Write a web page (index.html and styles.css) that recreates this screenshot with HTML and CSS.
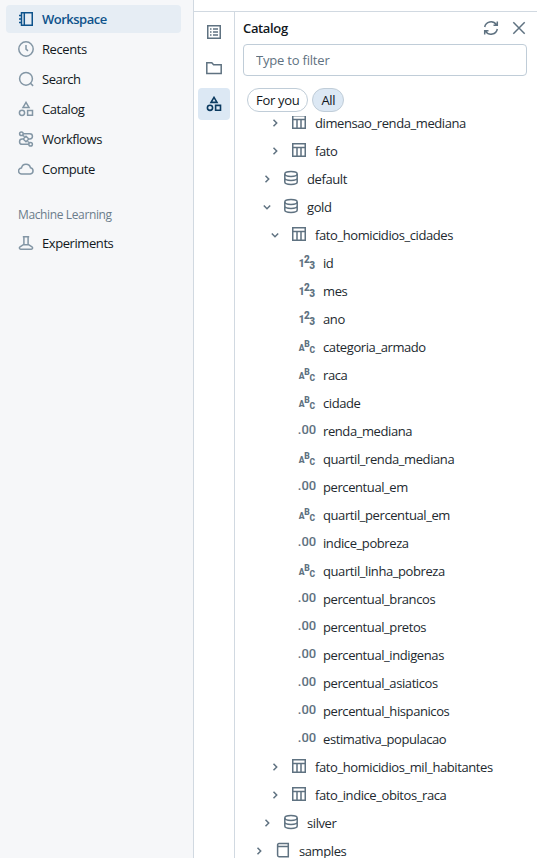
FILE: index.html
```html
<!DOCTYPE html>
<html lang="en">
<head>
<meta charset="utf-8">
<title>Catalog</title>
<link rel="stylesheet" href="styles.css">
</head>
<body>
<svg class="defs" aria-hidden="true">
  <symbol id="shapes" viewBox="0 0 16 16"><path d="M8 1.4 11 6.4H5ZM9.6 9.4h4.9v4.9H9.6Z"/><circle cx="4" cy="11.8" r="2.6"/></symbol>
  <symbol id="table" viewBox="0 0 16 16"><path d="M1.75 1.75h12.5v12.5H1.75ZM1.75 5.5h12.5M6 5.5v8.75M10 5.5v8.75"/></symbol>
  <symbol id="db" viewBox="0 0 16 16"><ellipse cx="8" cy="4" rx="6.2" ry="2.4"/><path d="M1.8 4v8c0 1.3 2.8 2.4 6.2 2.4s6.2-1.1 6.2-2.4V4M1.8 8c0 1.3 2.8 2.4 6.2 2.4s6.2-1.1 6.2-2.4"/></symbol>
  <symbol id="book" viewBox="0 0 16 16"><path d="M13.3 4.4H3.8a1.3 1.3 0 0 1-1.2-1.4A1.4 1.4 0 0 1 4 1.5h9.3v13.2H4a1.4 1.4 0 0 1-1.4-1.4V3"/></symbol>
  <symbol id="right" viewBox="0 0 16 16"><path d="m6.5 4.8 3.2 3.2-3.2 3.2"/></symbol>
  <symbol id="down" viewBox="0 0 16 16"><path d="m4.8 6.5 3.2 3.2 3.2-3.2"/></symbol>
</svg>
<div class="app">
  <nav class="sidebar">
    <a class="item active"><svg viewBox="0 0 16 16"><path d="M3.5 1.75h10.75v12.5H3.5ZM6.3 1.75v12.5M1 4.5h2.5M1 8h2.5M1 11.5h2.5"/></svg><span>Workspace</span></a>
    <a class="item"><svg viewBox="0 0 16 16"><circle cx="8" cy="8" r="7.2"/><path d="M8 4v4.2l2 1.6"/></svg><span>Recents</span></a>
    <a class="item"><svg viewBox="0 0 16 16"><circle cx="8" cy="7.8" r="6.4"/><path d="m12.2 12 2.9 2.9"/></svg><span>Search</span></a>
    <a class="item"><svg><use href="#shapes"/></svg><span>Catalog</span></a>
    <a class="item"><svg viewBox="0 0 16 16"><circle cx="3.4" cy="2.7" r="1.8"/><circle cx="12.6" cy="13.3" r="1.8"/><path d="M5.2 2.7h6.6a2.65 2.65 0 0 1 0 5.3h-1M5.2 8h-1a2.65 2.65 0 0 0 0 5.3h6.6M4.6 4.2c.6.9 1.2 1 2 1.2M11.4 11.8c-.6-.9-1.2-1-2-1.2M8 5.3 10.8 8 8 10.7 5.2 8Z"/></svg><span>Workflows</span></a>
    <a class="item"><svg viewBox="0 0 16 16"><path d="M3.8 13.1a3.1 3.1 0 0 1-.3-6.2 4.6 4.6 0 0 1 9-.1 3.2 3.2 0 0 1-.2 6.3Z"/></svg><span>Compute</span></a>
    <h2 class="section">Machine Learning</h2>
    <a class="item"><svg viewBox="0 0 16 16"><path d="M4.8 1.7h6.4M5.9 1.7v7.6L2 11.8a1.3 1.3 0 0 0 .7 2.4h10.6a1.3 1.3 0 0 0 .7-2.4l-3.9-2.5V1.7M5.6 9.8h4.8"/></svg><span>Experiments</span></a>
  </nav>
  <main class="main">
    <div class="rail">
      <button><svg viewBox="0 0 16 16"><path d="M1.75 1.75h12.5v12.5H1.75ZM4 5h1.5M7 5h5M4 8h1.5M7 8h5M4 11h1.5M7 11h5"/></svg></button>
      <button><svg viewBox="0 0 16 16"><path d="M.8 2.8h5l1.8 2h7.6v8.7H.8Z"/></svg></button>
      <button class="on"><svg><use href="#shapes"/></svg></button>
    </div>
    <section class="panel">
      <header class="head"><h1>Catalog</h1>
        <svg viewBox="0 0 16 16"><path d="M1.7 7A6.4 6.4 0 0 1 13.3 4.6M14.3 9A6.4 6.4 0 0 1 2.7 11.4M14.3 1.5v3.8h-3.8M1.7 14.5v-3.8h3.8"/></svg>
        <svg viewBox="0 0 16 16"><path d="m2.3 2.3 11.4 11.4M13.7 2.3 2.3 13.7"/></svg>
      </header>
      <input class="filter" placeholder="Type to filter">
      <div class="pills"><button>For you</button><button class="on">All</button></div>
      <div class="tree">
        <div class="row l2"><svg><use href="#right"/></svg><svg class="ic"><use href="#table"/></svg><span>dimensao_renda_mediana</span></div>
        <div class="row l2"><svg><use href="#right"/></svg><svg class="ic"><use href="#table"/></svg><span>fato</span></div>
        <div class="row l1"><svg><use href="#right"/></svg><svg class="ic"><use href="#db"/></svg><span>default</span></div>
        <div class="row l1"><svg><use href="#down"/></svg><svg class="ic"><use href="#db"/></svg><span>gold</span></div>
        <div class="row l2"><svg><use href="#down"/></svg><svg class="ic"><use href="#table"/></svg><span>fato_homicidios_cidades</span></div>
        <div class="row col"><i class="t n"><b>1</b><b>2</b><b>3</b></i><span>id</span></div>
        <div class="row col"><i class="t n"><b>1</b><b>2</b><b>3</b></i><span>mes</span></div>
        <div class="row col"><i class="t n"><b>1</b><b>2</b><b>3</b></i><span>ano</span></div>
        <div class="row col"><i class="t"><b>A</b><b>B</b><b>C</b></i><span>categoria_armado</span></div>
        <div class="row col"><i class="t"><b>A</b><b>B</b><b>C</b></i><span>raca</span></div>
        <div class="row col"><i class="t"><b>A</b><b>B</b><b>C</b></i><span>cidade</span></div>
        <div class="row col"><i class="d">.00</i><span>renda_mediana</span></div>
        <div class="row col"><i class="t"><b>A</b><b>B</b><b>C</b></i><span>quartil_renda_mediana</span></div>
        <div class="row col"><i class="d">.00</i><span>percentual_em</span></div>
        <div class="row col"><i class="t"><b>A</b><b>B</b><b>C</b></i><span>quartil_percentual_em</span></div>
        <div class="row col"><i class="d">.00</i><span>indice_pobreza</span></div>
        <div class="row col"><i class="t"><b>A</b><b>B</b><b>C</b></i><span>quartil_linha_pobreza</span></div>
        <div class="row col"><i class="d">.00</i><span>percentual_brancos</span></div>
        <div class="row col"><i class="d">.00</i><span>percentual_pretos</span></div>
        <div class="row col"><i class="d">.00</i><span>percentual_indigenas</span></div>
        <div class="row col"><i class="d">.00</i><span>percentual_asiaticos</span></div>
        <div class="row col"><i class="d">.00</i><span>percentual_hispanicos</span></div>
        <div class="row col"><i class="d">.00</i><span>estimativa_populacao</span></div>
        <div class="row l2"><svg><use href="#right"/></svg><svg class="ic"><use href="#table"/></svg><span>fato_homicidios_mil_habitantes</span></div>
        <div class="row l2"><svg><use href="#right"/></svg><svg class="ic"><use href="#table"/></svg><span>fato_indice_obitos_raca</span></div>
        <div class="row l1"><svg><use href="#right"/></svg><svg class="ic"><use href="#db"/></svg><span>silver</span></div>
        <div class="row"><svg><use href="#right"/></svg><svg class="ic"><use href="#book"/></svg><span>samples</span></div>
      </div>
    </section>
  </main>
</div>
</body>
</html>
```
FILE: styles.css
```css
* { box-sizing: border-box; }
body { margin: 0; font: 13px/20px "Open Sans", "Noto Sans", sans-serif; letter-spacing: -0.2px; color: #11171c; background: #fff; }
button, input { font: inherit; letter-spacing: inherit; color: inherit; margin: 0; }
svg { width: 16px; height: 16px; flex: none; fill: none; stroke: #5f7281; stroke-width: 1.5; }
.defs { display: none; }
.app { display: flex; height: 858px; overflow: hidden; }
.sidebar { width: 194px; flex: none; padding: 5px 12px 0 6px; background: #f6f7f9; border-right: 1px solid #d1d9e1; letter-spacing: -0.42px; }
.item { display: flex; align-items: center; gap: 8px; height: 28px; margin-bottom: 2px; padding-left: 12px; border-radius: 4px; }
.item svg { stroke: #8396a5; }
.active { background: #e6edf4; color: #0e538b; font-weight: 600; letter-spacing: -0.5px; }
.item.active svg { stroke: #0e538b; }
.section { margin: 22px 0 4px; padding-left: 12px; font-size: 12px; line-height: 20px; font-weight: 400; letter-spacing: -0.37px; color: #6b7d8b; }
.main { flex: 1; display: flex; margin-top: 11px; border-top: 1px solid #d1d9e1; min-width: 0; }
.rail { width: 41px; flex: none; padding: 4px 4px 0; border-right: 1px solid #d1d9e1; }
.rail button { display: flex; align-items: center; justify-content: center; width: 32px; height: 32px; margin-bottom: 4px; padding: 0; border: 0; border-radius: 4px; background: none; }
.rail .on { background: #dce8f4; }
.rail .on svg { stroke: #0b3a60; stroke-width: 1.6; }
.panel { flex: 1; min-width: 0; display: flex; flex-direction: column; padding: 0 10px 0 8px; }
.head { display: flex; align-items: center; height: 32px; gap: 12px; }
.head h1 { flex: 1; margin: 0; font-size: 13px; font-weight: 600; letter-spacing: -0.35px; }
.filter { height: 32px; flex: none; width: 284px; padding: 0 12px; border: 1px solid #c0cdd8; border-radius: 4px; outline: 0; background: #fff; }
.filter::placeholder { color: #5f7281; opacity: 1; }
.pills { display: flex; gap: 4px; margin: 12px 0 4px 4px; }
.pills button { height: 24px; padding: 0 8px; border: 1px solid #c0cdd8; border-radius: 12px; background: #fff; line-height: 20px; letter-spacing: -0.3px; }
.pills .on { background: #dce8f4; }
.tree { flex: 1; overflow: hidden; min-height: 0; padding-left: 8px; letter-spacing: -0.41px; }
.row { display: flex; align-items: center; gap: 8px; height: 28px; flex: none; white-space: nowrap; }
.row:first-child { margin-top: -7px; }
.l1 { padding-left: 8px; }
.l2 { padding-left: 16px; }
.col { padding-left: 48px; }
.row .ic { margin-top: -2px; }
.row span { color: #22292f; }
.t, .d { display: flex; width: 16px; height: 16px; margin-top: -3px; flex: none; font-style: normal; color: #5f7281; letter-spacing: 0; }
.t b { width: 5.3px; display: flex; justify-content: center; font: 900 8.5px/10px Roboto, sans-serif; padding-top: 5px; }
.t b:nth-child(2) { padding-top: 1px; }
.t b:last-child { padding-top: 7px; }
.n b { font-size: 10px; }
.d { font: 500 13px/16px Roboto, sans-serif; justify-content: center; }
```
